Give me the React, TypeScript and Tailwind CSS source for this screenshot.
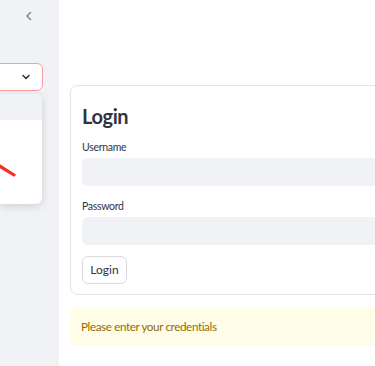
import React from "react";

export default function App() {
  return (
    <div className="flex h-[366px] w-[375px] overflow-hidden bg-white font-['Lato',sans-serif] text-[#31333f]">
      <aside className="relative w-[59px] shrink-0 bg-[#f0f2f6]">
        <div className="flex h-[32px] items-center justify-end pr-[24px]">
          <svg width="12" height="12" viewBox="0 0 24 24" fill="none" stroke="#808495" strokeWidth="3" strokeLinecap="round" strokeLinejoin="round">
            <path d="M15 5l-7 7 7 7" />
          </svg>
        </div>
        <div className="ml-[-200px] mt-[31px] flex h-[28px] w-[243px] items-center justify-end rounded-md border-[1.5px] border-[#f5a0a0] bg-white pr-[10px]">
          <svg width="12" height="12" viewBox="0 0 24 24" fill="none" stroke="#31333f" strokeWidth="3.2" strokeLinecap="round" strokeLinejoin="round">
            <path d="M6 9l6 6 6-6" />
          </svg>
        </div>
        <div className="absolute left-0 top-[94px] h-[110px] w-[42px] overflow-hidden rounded-r-md bg-white shadow-[0_2px_8px_rgba(0,0,0,0.15)]">
          <div className="h-[26px] bg-[#f0f2f6]" />
          <svg className="absolute left-0 top-[68px]" width="20" height="16" viewBox="0 0 20 16">
            <line x1="-2" y1="3" x2="14" y2="13" stroke="#ff2b2b" strokeWidth="3.2" strokeLinecap="round" />
          </svg>
        </div>
      </aside>
      <main className="flex-1 pl-[11px] pt-[85px]">
        <div className="w-[400px] rounded-lg border border-[#e3e3e8] px-[11px] pb-[10px] pt-[16px]">
          <h1 className="text-[20px] font-bold leading-[28px] tracking-[-0.4px] text-[#31333f]">Login</h1>
          <div className="mt-[9px] text-[10.5px] leading-[16px] tracking-[-0.3px]">Username</div>
          <div className="mt-[3px] h-[28px] rounded-md bg-[#f0f2f6]" />
          <div className="mt-[12px] text-[10.5px] leading-[16px] tracking-[-0.3px]">Password</div>
          <div className="mt-[3px] h-[28px] rounded-md bg-[#f0f2f6]" />
          <button className="mt-[11px] flex h-[28px] w-[45px] items-center justify-center rounded-md border border-[#d9d9de] bg-white text-[12px]">
            Login
          </button>
        </div>
        <div className="mt-[12px] flex h-[39px] w-[400px] items-center rounded-md bg-[#fffce7] px-[11px] text-[11.7px] tracking-[-0.4px] text-[#926c05]">
          Please enter your credentials
        </div>
      </main>
    </div>
  );
}
